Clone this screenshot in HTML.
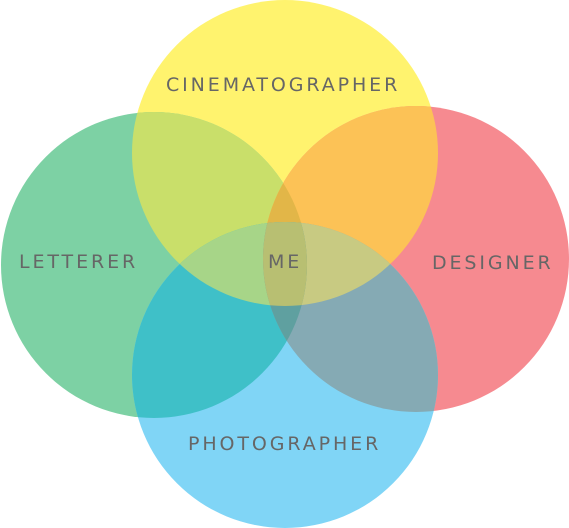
<!DOCTYPE html>
<html><head><style>
html,body{margin:0;padding:0;background:#fff;width:569px;height:528px;overflow:hidden}
.t{position:absolute;font-family:"DejaVu Sans","Liberation Sans",sans-serif;color:#666;font-size:19px;letter-spacing:2.9px;white-space:nowrap}
</style></head><body>
<div style="position:relative;width:569px;height:528px">
<svg width="569" height="528" style="position:absolute;left:0;top:0">
<defs>
<clipPath id="Y"><circle cx="285" cy="153" r="153"/></clipPath>
<clipPath id="R"><circle cx="416" cy="259" r="153"/></clipPath>
<clipPath id="G"><circle cx="154" cy="265" r="153"/></clipPath>
<clipPath id="B"><circle cx="285" cy="375" r="153"/></clipPath>
</defs>
<circle cx="285" cy="153" r="153" fill="#fff36e"/>
<circle cx="416" cy="259" r="153" fill="#f68a90"/>
<circle cx="154" cy="265" r="153" fill="#7dd1a4"/>
<circle cx="285" cy="375" r="153" fill="#80d5f6"/>
<!-- pairs -->
<g clip-path="url(#Y)"><circle cx="154" cy="265" r="153" fill="#c9df6a"/><circle cx="416" cy="259" r="153" fill="#fcc256"/></g>
<g clip-path="url(#G)"><circle cx="285" cy="375" r="153" fill="#3fc0c8"/></g>
<g clip-path="url(#R)"><circle cx="285" cy="375" r="153" fill="#85aab4"/></g>
<!-- triples -->
<g clip-path="url(#Y)"><g clip-path="url(#G)"><circle cx="416" cy="259" r="153" fill="#e2b648"/><circle cx="285" cy="375" r="153" fill="#a7d588"/></g></g>
<g clip-path="url(#Y)"><g clip-path="url(#R)"><circle cx="285" cy="375" r="153" fill="#c8ca82"/></g></g>
<g clip-path="url(#G)"><g clip-path="url(#R)"><circle cx="285" cy="375" r="153" fill="#5fa0a0"/></g></g>
<!-- quad -->
<g clip-path="url(#Y)"><g clip-path="url(#G)"><g clip-path="url(#R)"><circle cx="285" cy="375" r="153" fill="#b8bf72"/></g></g></g>
</svg>
<div class="t" style="left:166px;top:74px">CINEMATOGRAPHER</div>
<div class="t" style="left:19px;top:251px">LETTERER</div>
<div class="t" style="left:268px;top:251px">ME</div>
<div class="t" style="left:432px;top:252px">DESIGNER</div>
<div class="t" style="left:188px;top:433px">PHOTOGRAPHER</div>
</div>
</body></html>
